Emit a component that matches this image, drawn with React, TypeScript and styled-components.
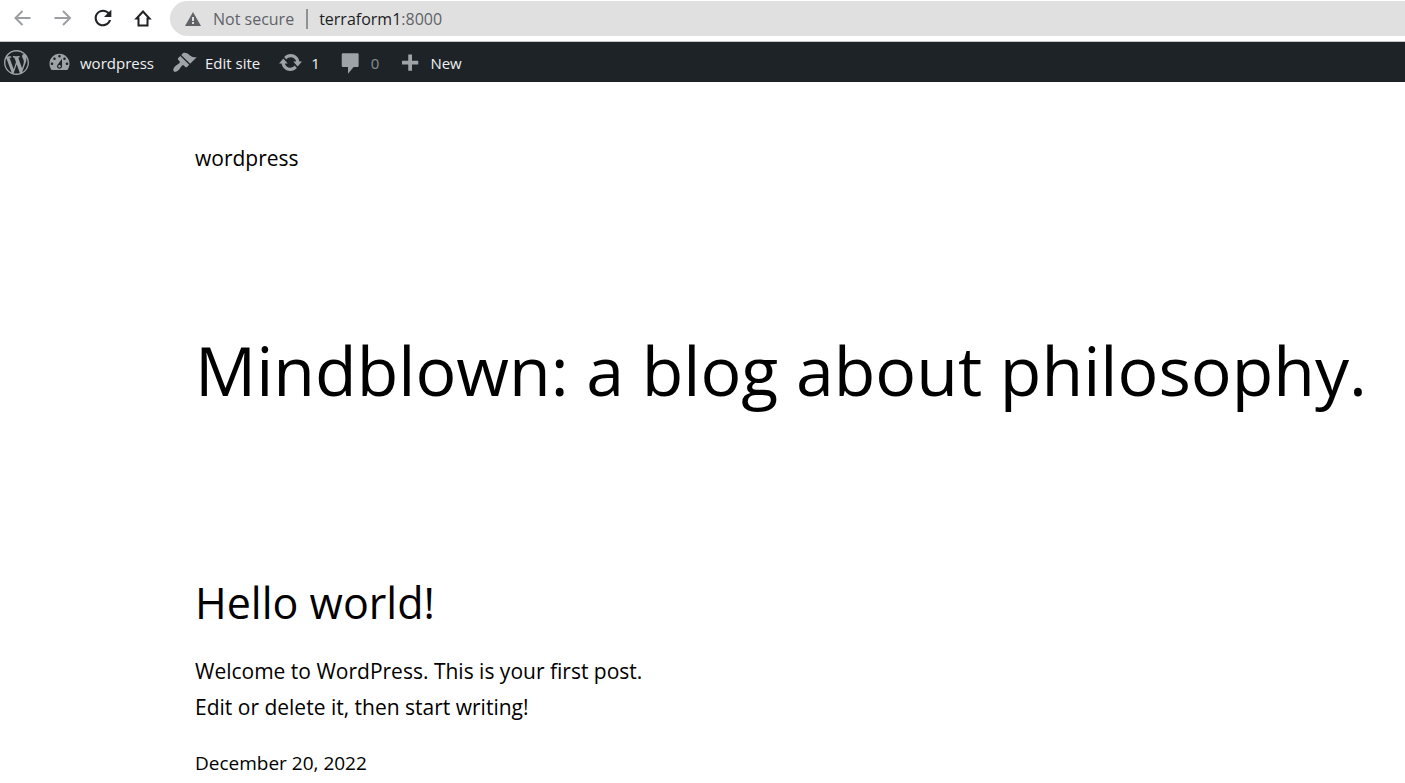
import React from "react";
import styled, { createGlobalStyle } from "styled-components";

const GlobalStyle = createGlobalStyle`
  * { box-sizing: border-box; }
  body {
    margin: 0;
    background: #fff;
    color: #000;
    font-family: "Segoe UI", "Open Sans", "Noto Sans", sans-serif;
  }
  a { color: inherit; text-decoration: none; }
`;

const BrowserBar = styled.header`
  display: flex;
  align-items: flex-start;
  height: 42px;
  padding-top: 1px;
  border-bottom: 1px solid #c4c6c8;
`;

const NavButtons = styled.nav`
  display: flex;
  gap: 16px;
  padding: 5px 15px 0 11px;
`;

const NavButton = styled.button`
  display: flex;
  width: 24px;
  height: 24px;
  padding: 0;
  border: 0;
  background: none;
  color: #202124;
  &:disabled { color: #9c9ea1; }
`;

const AddressBar = styled.div`
  display: flex;
  flex: 1;
  align-items: center;
  height: 35px;
  padding-left: 15px;
  border-radius: 18px 0 0 18px;
  background: #e0e0e0;
  color: #5f6368;
  font-size: 16px;
  line-height: 24px;
  white-space: nowrap;
`;

const Warning = styled.span`
  display: flex;
  align-items: center;
  gap: 12px;
  padding-right: 12px;
`;

const Url = styled.span`
  display: flex;
  align-items: center;
  gap: 11px;
  &::before {
    content: "";
    width: 2px;
    height: 20px;
    background: #8f9193;
  }
  b { color: #202124; font-weight: 400; }
`;

const AdminBar = styled.nav`
  display: flex;
  height: 40px;
  padding-left: 4px;
  gap: 18px;
  background: #1d2327;
  color: #f0f0f1;
  font-size: 15px;
  line-height: 24px;
`;

const AdminItem = styled.a<{ $muted?: boolean }>`
  display: flex;
  align-items: center;
  gap: 8px;
  span {
    padding-top: 2px;
    opacity: ${({ $muted }) => ($muted ? 0.5 : 1)};
  }
  svg { color: #9ea3a8; flex: none; }
`;

const Page = styled.main`
  padding: 58px 0 0 195px;
  font-size: 21px;
  line-height: 36px;
`;

const SiteTitle = styled.p`
  margin: 0 0 148px;
`;

const Headline = styled.h1`
  margin: 0 0 156px;
  font-size: 68px;
  font-weight: 400;
  line-height: 92px;
  white-space: nowrap;
`;

const PostTitle = styled.h2`
  margin: 0 0 19px;
  font-size: 43px;
  font-weight: 400;
  line-height: 62px;
`;

const Excerpt = styled.p`
  margin: 0 0 22px;
`;

const PostDate = styled.time`
  display: block;
  font-size: 19px;
  line-height: 32px;
`;

const Dashicon = ({ d }: { d: string }) => (
  <svg width="25" height="25" viewBox="0 0 20 20" fill="currentColor" aria-hidden="true">
    <path d={d} />
  </svg>
);

const ChromeIcon = ({ d, filled }: { d: string; filled?: boolean }) => (
  <svg
    width="24"
    height="24"
    viewBox={filled ? "0.5 0.5 23 23" : "0 0 24 24"}
    fill={filled ? "currentColor" : "none"}
    stroke={filled ? "none" : "currentColor"}
    strokeWidth="2"
    aria-hidden="true"
  >
    <path d={d} />
  </svg>
);

const icons = {
  wordpress:
    "M20 10c0-5.51-4.49-10-10-10C4.48 0 0 4.49 0 10c0 5.52 4.48 10 10 10 5.51 0 10-4.48 10-10zM7.78 15.37L4.37 6.22c.55-.02 1.17-.08 1.17-.08.5-.06.44-1.13-.06-1.11 0 0-1.45.11-2.37.11-.18 0-.37 0-.58-.01C4.12 2.69 6.87 1.11 10 1.11c2.33 0 4.45.87 6.05 2.34-.68-.11-1.65.39-1.65 1.58 0 .74.45 1.36.9 2.1.35.61.55 1.36.55 2.46 0 1.49-1.4 5-1.4 5l-3.03-8.37c.54-.02.82-.17.82-.17.5-.05.44-1.25-.06-1.22 0 0-1.44.12-2.38.12-.87 0-2.33-.12-2.33-.12-.5-.03-.56 1.2-.06 1.22l.92.08 1.26 3.41zM17.41 10c.24-.64.74-1.87.43-4.25.7 1.29 1.05 2.71 1.05 4.25 0 3.29-1.73 6.24-4.4 7.78.97-2.59 1.94-5.2 2.92-7.78zM6.1 18.09C3.12 16.65 1.11 13.53 1.11 10c0-1.3.23-2.48.72-3.59C3.25 10.3 4.67 14.2 6.1 18.09zm4.03-6.63l2.58 6.98c-.86.29-1.76.45-2.71.45-.79 0-1.57-.11-2.29-.33.81-2.38 1.62-4.74 2.42-7.1z",
  dashboard:
    "M3.76 16h12.48c1.1-1.37 1.76-3.11 1.76-5 0-4.42-3.58-8-8-8s-8 3.58-8 8c0 1.89.66 3.63 1.76 5zM10 4c.55 0 1 .45 1 1s-.45 1-1 1-1-.45-1-1 .45-1 1-1zM6 6c.55 0 1 .45 1 1s-.45 1-1 1-1-.45-1-1 .45-1 1-1zm8 0c.55 0 1 .45 1 1s-.45 1-1 1-1-.45-1-1 .45-1 1-1zm-5.37 5.55L12 7v6c0 1.1-.9 2-2 2s-2-.9-2-2c0-.57.24-1.08.63-1.45zM4 10c.55 0 1 .45 1 1s-.45 1-1 1-1-.45-1-1 .45-1 1-1zm12 0c.55 0 1 .45 1 1s-.45 1-1 1-1-.45-1-1 .45-1 1-1zm-5 3c0-.55-.45-1-1-1s-1 .45-1 1 .45 1 1 1 1-.45 1-1z",
  brush:
    "M14.48 11.06L7.41 3.99l1.5-1.5c.5-.56 2.3-.47 3.51.32 1.21.8 1.43 1.28 2.91 2.1 1.18.64 2.45 1.26 4.45.85zm-.71.71L6.7 4.7 4.93 6.47c-.39.39-.39 1.02 0 1.41l1.06 1.06c.39.39.39 1.03 0 1.42-.6.6-1.43 1.11-2.21 1.69-.35.26-.7.53-1.01.84C1.43 14.23.4 16.08 1.4 17.07c.99 1 2.84-.03 4.18-1.36.31-.31.58-.66.85-1.02.57-.78 1.08-1.61 1.69-2.21.39-.39 1.02-.39 1.41 0l1.06 1.06c.39.39 1.02.39 1.41 0z",
  update:
    "M10.2 3.28c3.53 0 6.43 2.61 6.92 6h2.08l-3.5 4-3.5-4h2.32c-.45-1.97-2.21-3.45-4.32-3.45-1.45 0-2.73.71-3.54 1.78L4.95 5.66C6.23 4.2 8.11 3.28 10.2 3.28zm-.4 13.44c-3.52 0-6.43-2.61-6.92-6H.8l3.5-4c1.17 1.33 2.33 2.67 3.5 4H5.48c.45 1.97 2.21 3.45 4.32 3.45 1.45 0 2.73-.71 3.54-1.78l1.71 1.95c-1.28 1.46-3.15 2.38-5.25 2.38z",
  comment:
    "M4 2.500h11.500c.6 0 1 .4 1 1v9c0 .6-.4 1-1 1H12.500l-4.500 5.500v-5.500H4c-.6 0-1-.4-1-1v-9c0-.6.4-1 1-1z",
  plus: "M17 8.500v3h-5v5H9v-5H4v-3h5v-5h3v5h5z",
};

export default function App() {
  return (
    <>
      <GlobalStyle />
      <BrowserBar>
        <NavButtons aria-label="Browser">
          <NavButton disabled aria-label="Back">
            <ChromeIcon d="M19.500 12H5M11.500 5L4.500 12l7 7" />
          </NavButton>
          <NavButton disabled aria-label="Forward">
            <ChromeIcon d="M3.500 12h15M12 5l7 7-7 7" />
          </NavButton>
          <NavButton aria-label="Reload">
            <ChromeIcon
              filled
              d="M17.65 6.35C16.2 4.9 14.21 4 12 4c-4.42 0-7.99 3.58-7.99 8s3.57 8 7.99 8c3.73 0 6.84-2.55 7.73-6h-2.08c-.82 2.33-3.04 4-5.65 4-3.31 0-6-2.69-6-6s2.69-6 6-6c1.66 0 3.14.69 4.22 1.78L13 11h7V4l-2.35 2.35z"
            />
          </NavButton>
          <NavButton aria-label="Home">
            <ChromeIcon d="M12 5.500L5.500 12.500H7.500V19.500H16.500V12.500H18.500Z" />
          </NavButton>
        </NavButtons>
        <AddressBar>
          <Warning>
            <svg width="16" height="14" viewBox="0 0 16 14" aria-hidden="true">
              <path d="M8 0l8 14H0z" fill="#5f6368" />
              <path d="M7 5h2v4H7zM7 10h2v2H7z" fill="#e0e0e0" />
            </svg>
            Not secure
          </Warning>
          <Url>
            <span><b>terraform1</b>:8000</span>
          </Url>
        </AddressBar>
      </BrowserBar>
      <AdminBar aria-label="Toolbar">
        <AdminItem href="#about" aria-label="About WordPress"><Dashicon d={icons.wordpress} /></AdminItem>
        <AdminItem href="#dashboard"><Dashicon d={icons.dashboard} /><span>wordpress</span></AdminItem>
        <AdminItem href="#edit"><Dashicon d={icons.brush} /><span>Edit site</span></AdminItem>
        <AdminItem href="#updates"><Dashicon d={icons.update} /><span>1</span></AdminItem>
        <AdminItem href="#comments" $muted><Dashicon d={icons.comment} /><span>0</span></AdminItem>
        <AdminItem href="#new"><Dashicon d={icons.plus} /><span>New</span></AdminItem>
      </AdminBar>
      <Page>
        <SiteTitle><a href="#home">wordpress</a></SiteTitle>
        <Headline>Mindblown: a blog about philosophy.</Headline>
        <article>
          <PostTitle><a href="#hello">Hello world!</a></PostTitle>
          <Excerpt>
            Welcome to WordPress. This is your first post.
            <br />
            Edit or delete it, then start writing!
          </Excerpt>
          <PostDate dateTime="2022-12-20">December 20, 2022</PostDate>
        </article>
      </Page>
    </>
  );
}
